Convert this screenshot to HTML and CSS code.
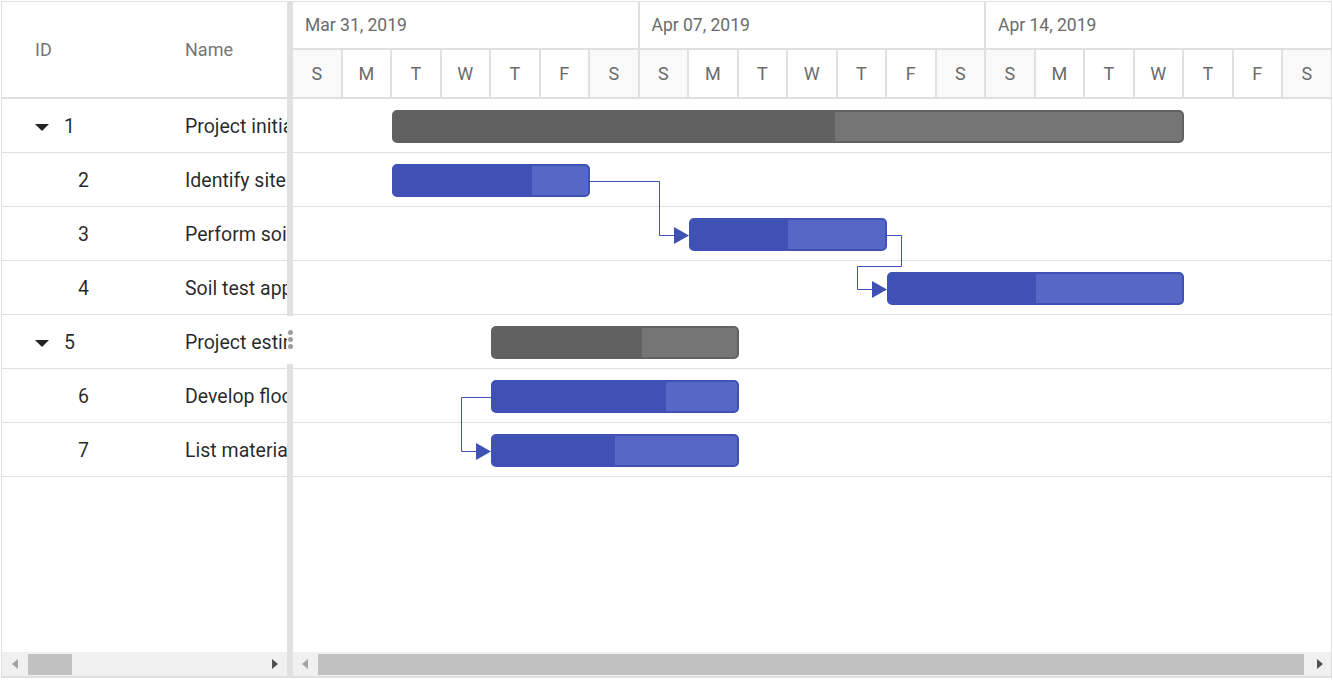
FILE: index.html
```html
<!DOCTYPE html>
<html lang="en">

<head>
    <meta charset="UTF-8">
    <meta name="viewport" content="width=device-width, initial-scale=1.0">
    <title>Project Gantt</title>
    <link rel="stylesheet" href="styles.css">
</head>

<body>
    <div class="gantt">
        <!-- tree grid side -->
        <div class="grid-pane">
            <div class="grid-header">
                <div class="col-id">ID</div>
                <div class="col-name">Name</div>
            </div>
            <div class="grid-body">
                <div class="grid-row">
                    <div class="col-id"><span class="expander"></span>1</div>
                    <div class="col-name">Project initiation</div>
                </div>
                <div class="grid-row">
                    <div class="col-id child">2</div>
                    <div class="col-name">Identify site location</div>
                </div>
                <div class="grid-row">
                    <div class="col-id child">3</div>
                    <div class="col-name">Perform soil test</div>
                </div>
                <div class="grid-row">
                    <div class="col-id child">4</div>
                    <div class="col-name">Soil test approval</div>
                </div>
                <div class="grid-row">
                    <div class="col-id"><span class="expander"></span>5</div>
                    <div class="col-name">Project estimation</div>
                </div>
                <div class="grid-row">
                    <div class="col-id child">6</div>
                    <div class="col-name">Develop floor plan for estimation</div>
                </div>
                <div class="grid-row">
                    <div class="col-id child">7</div>
                    <div class="col-name">List materials</div>
                </div>
            </div>
            <div class="hscroll grid-scroll">
                <span class="arrow-left"></span>
                <span class="thumb"></span>
                <span class="arrow-right"></span>
            </div>
        </div>

        <div class="splitter">
            <span class="handle"><i></i><i></i><i></i></span>
        </div>

        <!-- chart side -->
        <div class="chart-pane">
            <div class="timeline">
                <div class="tier-top">
                    <div class="week">Mar 31, 2019</div>
                    <div class="week">Apr 07, 2019</div>
                    <div class="week">Apr 14, 2019</div>
                </div>
                <div class="tier-days">
                    <div class="day weekend">S</div>
                    <div class="day">M</div>
                    <div class="day">T</div>
                    <div class="day">W</div>
                    <div class="day">T</div>
                    <div class="day">F</div>
                    <div class="day weekend">S</div>
                    <div class="day weekend">S</div>
                    <div class="day">M</div>
                    <div class="day">T</div>
                    <div class="day">W</div>
                    <div class="day">T</div>
                    <div class="day">F</div>
                    <div class="day weekend">S</div>
                    <div class="day weekend">S</div>
                    <div class="day">M</div>
                    <div class="day">T</div>
                    <div class="day">W</div>
                    <div class="day">T</div>
                    <div class="day">F</div>
                    <div class="day weekend">S</div>
                </div>
            </div>
            <div class="chart-body">
                <div class="chart-row">
                    <div class="bar parent" style="left:99px;width:792px"><div class="progress" style="width:56%"></div></div>
                </div>
                <div class="chart-row">
                    <div class="bar" style="left:99px;width:198px"><div class="progress" style="width:71%"></div></div>
                </div>
                <div class="chart-row">
                    <div class="bar" style="left:396px;width:198px"><div class="progress" style="width:50%"></div></div>
                </div>
                <div class="chart-row">
                    <div class="bar" style="left:594px;width:297px"><div class="progress" style="width:50%"></div></div>
                </div>
                <div class="chart-row">
                    <div class="bar parent" style="left:198px;width:247.5px"><div class="progress" style="width:61%"></div></div>
                </div>
                <div class="chart-row">
                    <div class="bar" style="left:198px;width:247.5px"><div class="progress" style="width:71%"></div></div>
                </div>
                <div class="chart-row">
                    <div class="bar" style="left:198px;width:247.5px"><div class="progress" style="width:50%"></div></div>
                </div>

                <svg class="connectors" width="1040" height="400" viewBox="0 0 1040 400">
                    <g fill="none" stroke="#3f51b5" stroke-width="1">
                        <path d="M297 82.5 H366.5 V136.5 H382" />
                        <path d="M594 136.5 H608.5 V167.5 H564.5 V190.5 H580" />
                        <path d="M198 298.5 H168.5 V352.5 H184" />
                    </g>
                    <g fill="#3f51b5">
                        <polygon points="381,128 396,136.5 381,145" />
                        <polygon points="579,182 594,190.5 579,199" />
                        <polygon points="183,344 198,352.5 183,361" />
                    </g>
                </svg>
            </div>
            <div class="hscroll chart-scroll">
                <span class="arrow-left"></span>
                <span class="thumb"></span>
                <span class="arrow-right"></span>
            </div>
        </div>
    </div>
</body>

</html>
```

FILE: styles.css
```css
* {
    margin: 0;
    padding: 0;
    box-sizing: border-box;
}

body {
    background: #fff;
    font-family: Roboto, "Noto Sans", sans-serif;
    overflow: hidden;
}

.gantt {
    display: flex;
    width: 1331px;
    height: 677px;
    margin: 1px 0 0 1px;
    border: 1px solid #e0e0e0;
    background: #fff;
}

/* Grid side */
.grid-pane {
    width: 285px;
    display: flex;
    flex-direction: column;
    overflow: hidden;
    border-bottom: 1px solid #e0e0e0;
}

.grid-header {
    height: 97px;
    display: flex;
    align-items: center;
    border-bottom: 2px solid #e0e0e0;
    color: #757575;
    font-size: 18px;
    flex-shrink: 0;
}

.grid-body {
    flex: 1;
}

.grid-row {
    height: 54px;
    display: flex;
    align-items: center;
    padding-top: 2px;
    border-bottom: 1px solid #e0e0e0;
    color: rgba(0, 0, 0, 0.85);
    font-size: 19.5px;
    white-space: nowrap;
}

.col-id {
    width: 149px;
    flex-shrink: 0;
    padding-left: 33px;
    display: flex;
    align-items: center;
}

.col-id.child {
    padding-left: 76px;
}

.col-name {
    padding-left: 34px;
    white-space: nowrap;
}

.expander {
    width: 0;
    height: 0;
    border-left: 7px solid transparent;
    border-right: 7px solid transparent;
    border-top: 7px solid #212121;
    margin-right: 15px;
    margin-top: 1px;
}

/* Splitter */
.splitter {
    width: 6px;
    flex-shrink: 0;
    background: #e0e0e0;
    display: flex;
    align-items: center;
}

.handle {
    width: 6px;
    height: 48px;
    background: #fff;
    display: flex;
    flex-direction: column;
    align-items: center;
    justify-content: center;
    gap: 2px;
}

.handle i {
    width: 5px;
    height: 5px;
    border-radius: 50%;
    background: #9e9e9e;
}

/* Chart side */
.chart-pane {
    flex: 1;
    display: flex;
    flex-direction: column;
    overflow: hidden;
    border-bottom: 1px solid #e0e0e0;
}

.timeline {
    flex-shrink: 0;
}

.tier-top, .tier-days {
    display: flex;
}

.tier-top {
    height: 48px;
    border-bottom: 2px solid #e0e0e0;
}

.week {
    width: 346.5px;
    flex-shrink: 0;
    border-right: 2px solid #e0e0e0;
    display: flex;
    align-items: center;
    padding-left: 12px;
    color: #6b6b6b;
    font-size: 17.5px;
}

.tier-days {
    height: 49px;
    border-bottom: 2px solid #e0e0e0;
}

.day {
    width: 49.5px;
    flex-shrink: 0;
    border-right: 2px solid #e0e0e0;
    display: flex;
    align-items: center;
    justify-content: center;
    color: #6b6b6b;
    font-size: 18px;
}

.day.weekend {
    background: #f9f9f9;
}

.chart-body {
    flex: 1;
    position: relative;
}

.chart-row {
    height: 54px;
    border-bottom: 1px solid #e0e0e0;
    position: relative;
}

.bar {
    position: absolute;
    top: 11px;
    height: 33px;
    border: 2px solid #3f51b5;
    border-radius: 5px;
    background: #5767c6;
    overflow: hidden;
}

.bar .progress {
    height: 100%;
    background: #3f51b5;
}

.bar.parent {
    border-color: #616161;
    background: #757575;
}

.bar.parent .progress {
    background: #616161;
}

.connectors {
    position: absolute;
    top: 0;
    left: 0;
    pointer-events: none;
}

/* Fake horizontal scrollbars */
.hscroll {
    height: 24px;
    flex-shrink: 0;
    background: #f0f0f0;
    display: flex;
    align-items: center;
}

.thumb {
    height: 21px;
    background: #c1c1c1;
}

.arrow-left {
    width: 0;
    height: 0;
    border-top: 5px solid transparent;
    border-bottom: 5px solid transparent;
    border-right: 6px solid #a3a3a3;
}

.arrow-right {
    width: 0;
    height: 0;
    border-top: 5px solid transparent;
    border-bottom: 5px solid transparent;
    border-left: 6px solid #505050;
    margin-left: auto;
}

.grid-scroll {
    padding: 0 9px 0 10px;
}

.grid-scroll .thumb {
    width: 44px;
    margin-left: 10px;
}

.chart-scroll {
    padding: 0 8px 0 9px;
}

.chart-scroll .thumb {
    width: 986px;
    margin-left: 10px;
}
```
